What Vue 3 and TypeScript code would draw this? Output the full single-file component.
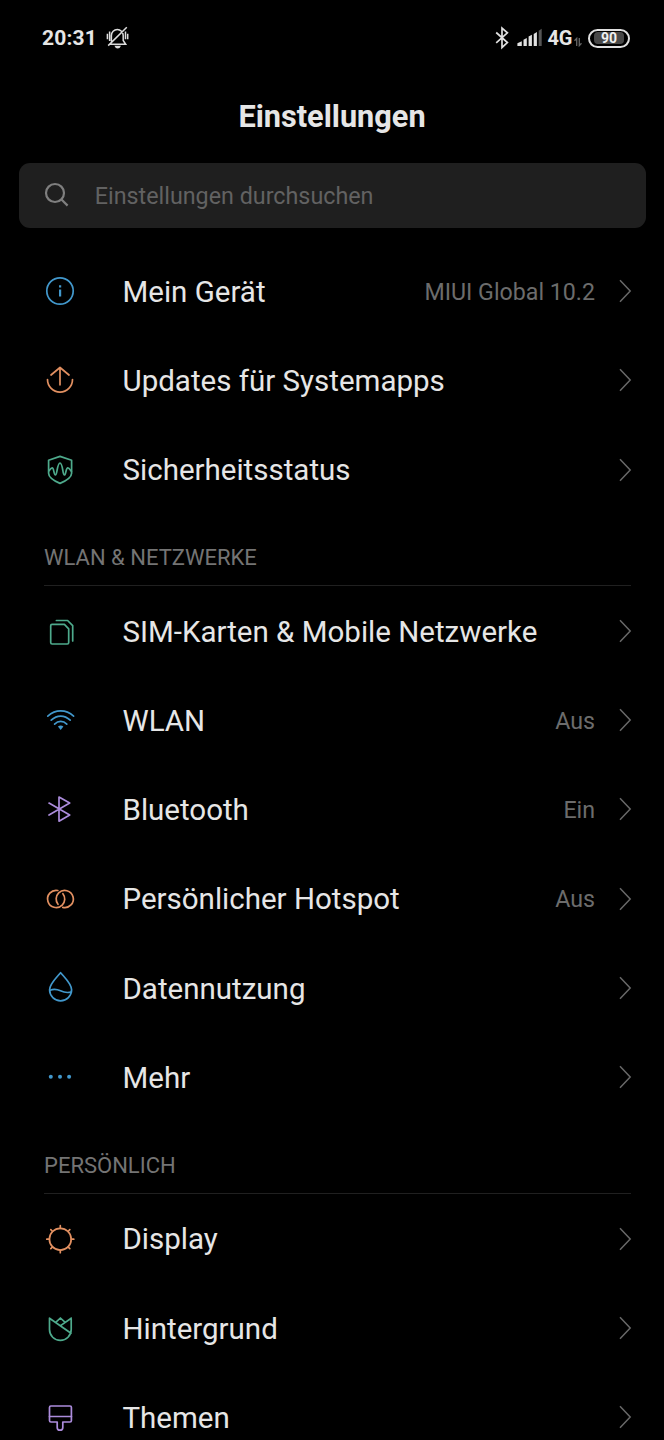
<script setup lang="ts">
interface Item {
  icon: string
  label: string
  value?: string
}
interface Group {
  title?: string
  items: Item[]
}

const groups: Group[] = [
  {
    items: [
      { icon: 'info', label: 'Mein Gerät', value: 'MIUI Global 10.2' },
      { icon: 'update', label: 'Updates für Systemapps' },
      { icon: 'shield', label: 'Sicherheitsstatus' },
    ],
  },
  {
    title: 'WLAN & NETZWERKE',
    items: [
      { icon: 'sim', label: 'SIM-Karten & Mobile Netzwerke' },
      { icon: 'wifi', label: 'WLAN', value: 'Aus' },
      { icon: 'bluetooth', label: 'Bluetooth', value: 'Ein' },
      { icon: 'hotspot', label: 'Persönlicher Hotspot', value: 'Aus' },
      { icon: 'data', label: 'Datennutzung' },
      { icon: 'more', label: 'Mehr' },
    ],
  },
  {
    title: 'PERSÖNLICH',
    items: [
      { icon: 'display', label: 'Display' },
      { icon: 'wallpaper', label: 'Hintergrund' },
      { icon: 'themes', label: 'Themen' },
    ],
  },
]

const paths: Record<string, string[]> = {
  info: ['M33.2 21A13.2 13.2 0 1 1 6.8 21A13.2 13.2 0 1 1 33.2 21Z'],
  update: ['M20 8.5V25.8M11 16L20 8.5L29 16', 'M7.5 20.6A12.5 12.5 0 0 0 32.5 20.6'],
  shield: [
    'M20 7.4L31.6 11.3V24.2C31.6 28.5 25.5 32 20 34.4C14.5 32 8.6 28.5 8.6 24.2V11.3Z',
    'M8.8 22C10 20.5 11 18.8 12.2 18.8C14 18.8 13.8 26 15.4 26C17.2 26 17.2 14 20 14C22.8 14 22.6 26 24.4 26C26 26 25.8 18.8 27.8 18.8C29 18.8 30 20.5 31.4 22.4',
  ],
  sim: [
    'M12 14.4H24.4L28.7 18.8V32.6Q28.7 34 27.3 34H12.1Q10.7 34 10.7 32.6V15.8Q10.7 14.4 12 14.4Z',
    'M16.4 10.5H27.6L32.7 15.6V31',
  ],
  wifi: [
    'M7.8 17.1C15.5 10.2 25.9 10.2 33.6 17.1',
    'M11.2 21.2C17 15.7 24.4 15.7 30.2 21.2',
    'M14.6 25.1C18.2 21.5 23.2 21.5 26.8 25.1',
  ],
  bluetooth: ['M9 15.1L29.7 27.1L19 33.2V9.1L29.7 15.1L9 27.1'],
  hotspot: [
    'M17.8 12.5A8.6 8.6 0 1 0 22.2 27.1A8.6 8.6 0 0 0 22.9 15.7',
    'M22.8 29.4A8.6 8.6 0 1 0 18.7 14.9A8.6 8.6 0 0 0 18 26.3',
  ],
  data: [
    'M20.6 5.7C18 9.1 9.6 16.6 9.6 22.8A11 11 0 0 0 31.6 22.8C31.6 16.6 23.2 9.1 20.6 5.7Z',
    'M10 23.2C20 19.2 20.5 28 31.3 25',
  ],
  more: [],
  display: [
    'M31.2 21.2A10.9 10.9 0 1 1 9.4 21.2A10.9 10.9 0 1 1 31.2 21.2Z',
    'M20.3 10.3V7.7M20.3 32.1V34.7M9.4 21.2H6.8M31.2 21.2H33.8M12.6 13.5L10.8 11.7M28 13.5L29.8 11.7M12.6 28.9L10.8 30.7M28 28.9L29.8 30.7',
  ],
  wallpaper: [
    'M31.2 11.2V22.6A10.85 10.85 0 0 1 9.5 22.6V11.2L31 26.3M31.2 11.2L20.6 18.6',
    'M16 15.2L20.4 11L24.9 15.2',
  ],
  themes: [
    'M10.9 10H30Q31.4 10 31.4 11.4V24.6Q31.4 26 30 26H22.8V31.4A2.8 2.8 0 0 1 17.2 31.4V26H10.9Q9.5 26 9.5 24.6V11.4Q9.5 10 10.9 10Z',
    'M9.5 20.5H31.4',
  ],
}
</script>

<template>
  <div class="screen">
    <header class="status">
      <span class="time">20:31</span>
      <svg class="bell" width="24" height="24" viewBox="0 0 24 24">
        <path d="M5.4 15.6V9.4A5.9 5.9 0 0 1 17.2 9.4V14.5L19.7 18.3H4.2M20.8 1.2L2.2 19.6M1.4 7.8V13.2M3.6 5.6V15M19.5 5.6V13.2M21.7 7.8V13.2" />
        <path class="solid" d="M8.4 19.8H15Q14 22.6 11.7 22.6Q9.4 22.6 8.4 19.8Z" />
      </svg>
      <div class="system">
        <svg class="bt" width="14" height="24" viewBox="0 0 14 24">
          <path d="M1.2 6.5L12.4 16.6L7 21.5V2.2L12.4 6.8L1.2 16.8" />
        </svg>
        <svg class="signal" width="26" height="20" viewBox="0 0 26 20">
          <path d="M.4 15.2L4.8 13.2V18H.4ZM6.5 11.7L9.8 10V18H6.5ZM11.6 8.6L14.9 6.7V18H11.6ZM16.7 6L19.9 4V18H16.7Z" />
          <path class="dim" d="M21.7 2.8L24.7 .8V18H21.7Z" />
        </svg>
        <span class="net">4G</span>
        <svg class="arrows" width="8" height="10" viewBox="0 0 8 10">
          <path d="M2.7 9V1.4L.5 3.8M5.3 1V8.6L7.5 6.2" />
        </svg>
        <span class="battery"><span class="level">90</span></span>
      </div>
    </header>

    <h1>Einstellungen</h1>

    <div class="search">
      <svg width="26" height="26" viewBox="0 0 26 26">
        <circle cx="11" cy="11" r="9" />
        <path d="M17.5 17.5L23.6 23.6" />
      </svg>
      <span>Einstellungen durchsuchen</span>
    </div>

    <main>
      <section v-for="(group, i) in groups" :key="i">
        <h2 v-if="group.title">{{ group.title }}</h2>
        <div v-for="item in group.items" :key="item.icon" class="row">
          <svg class="icon" :class="item.icon" width="42" height="42" viewBox="0 0 42 42">
            <path v-for="d in paths[item.icon]" :key="d" :d="d" />
            <path v-if="item.icon === 'info'" class="fill" d="M19 19.6H21.2V26.6H19ZM19 15.2H21.2V17.4H19Z" />
            <path v-if="item.icon === 'wifi'" class="fill" d="M17.9 27.6Q20.7 25.3 23.4 27.6L20.7 31Z" />
            <template v-if="item.icon === 'more'">
              <circle class="fill" cx="10.8" cy="20.7" r="2" />
              <circle class="fill" cx="20" cy="20.7" r="2" />
              <circle class="fill" cx="29.1" cy="20.7" r="2" />
            </template>
          </svg>
          <span class="label">{{ item.label }}</span>
          <span class="value">{{ item.value }}</span>
          <svg class="chevron" width="14" height="24" viewBox="0 0 14 24">
            <path d="M2 1.3L12.2 12L2 22.7" />
          </svg>
        </div>
      </section>
    </main>
  </div>
</template>

<style>
html,
body {
  background: #000;
}
</style>

<style scoped>
.screen {
  width: 664px;
  height: 1440px;
  overflow: hidden;
  background: #000;
  color: #e6e6e6;
  font-family: Roboto, sans-serif;
}
svg {
  flex: none;
  fill: none;
}
.status {
  display: flex;
  align-items: center;
  height: 76px;
  padding: 0 34px 0 42px;
}
.time {
  width: 64px;
  font-size: 21px;
  font-weight: 700;
  letter-spacing: 0.2px;
  line-height: 28px;
}
.bell {
  stroke: #dcdcdc;
  stroke-width: 1.5;
}
.bell .solid {
  fill: #dcdcdc;
  stroke: none;
}
.system {
  display: flex;
  align-items: center;
  margin-left: auto;
}
.bt {
  stroke: #e0e0e0;
  stroke-width: 1.7;
  margin-right: 8.5px;
}
.signal {
  fill: #e0e0e0;
}
.signal .dim {
  fill: #555;
}
.net {
  margin-left: 4px;
  font-size: 20px;
  font-weight: 700;
  line-height: 28px;
}
.arrows {
  stroke: #666;
  stroke-width: 1.3;
  margin: 8px 6.5px 0 1px;
}
.battery {
  display: flex;
  box-sizing: border-box;
  width: 42px;
  height: 19px;
  padding: 1.5px 4px;
  border: 2px solid #e0e0e0;
  border-radius: 10px;
}
.level {
  flex: 1;
  border-radius: 4px;
  background: #484848;
  color: #f0f0f0;
  font-size: 14px;
  font-weight: 700;
  line-height: 13px;
  text-align: center;
}
h1 {
  margin: 0;
  height: 86px;
  padding-top: 20px;
  box-sizing: border-box;
  font-size: 30.7px;
  font-weight: 700;
  line-height: 41px;
  text-align: center;
}
.search {
  display: flex;
  align-items: center;
  box-sizing: border-box;
  height: 65px;
  margin: 0.5px 18px 0 18.5px;
  padding-left: 25px;
  border-radius: 11px;
  background: #1f1f1f;
  color: #626262;
  font-size: 23.3px;
}
.search svg {
  margin-right: 25.3px;
  stroke: #7f7f7f;
  stroke-width: 2.2;
}
.search span {
  padding-top: 1px;
}
main {
  padding-top: 18.9px;
}
h2 {
  box-sizing: border-box;
  height: 71.7px;
  margin: 0 33px 0.5px 44px;
  padding-top: 30.3px;
  border-bottom: 1px solid #202020;
  color: #747474;
  font-size: 22px;
  font-weight: 400;
  line-height: 28px;
}
.row {
  display: flex;
  align-items: center;
  height: 89.25px;
  padding: 0 32px 0 40px;
}
.icon {
  margin-right: 40.5px;
  stroke: currentColor;
  stroke-width: 1.7;
  stroke-linecap: round;
  stroke-linejoin: round;
}
.icon .fill {
  fill: currentColor;
  stroke: none;
}
.info,
.wifi,
.data,
.more {
  color: #4298cc;
}
.update,
.hotspot,
.display {
  color: #e29061;
}
.shield,
.sim,
.wallpaper {
  color: #4eaa8c;
}
.bluetooth,
.themes {
  color: #ac8cdc;
}
.label {
  padding-top: 1.5px;
  font-size: 29.5px;
  line-height: 36px;
  white-space: nowrap;
}
.value {
  margin-left: auto;
  margin-right: 23px;
  padding-top: 1px;
  color: #6c6c6c;
  font-size: 23.2px;
  line-height: 30px;
}
.chevron {
  stroke: #686868;
  stroke-width: 1.5;
}
</style>
